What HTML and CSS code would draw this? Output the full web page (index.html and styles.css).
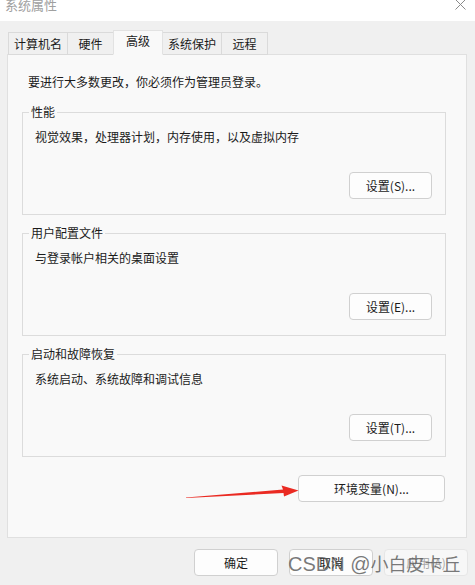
FILE: index.html
```html
<!DOCTYPE html>
<html lang="zh-CN">
<head>
    <meta charset="UTF-8">
    <meta name="viewport" content="width=device-width, initial-scale=1.0">
    <title>系统属性</title>
    <link rel="stylesheet" href="styles.css">
</head>
<body>
    <!-- Title bar -->
    <div class="titlebar">
        <span class="title">系统属性</span>
        <svg class="close" width="11" height="11" viewBox="0 0 11 11">
            <path d="M0.5 0.5 L10.5 10.5 M10.5 0.5 L0.5 10.5" stroke="#8a8a8a" stroke-width="1" fill="none"/>
        </svg>
    </div>

    <div class="dialog">
        <!-- Tabs -->
        <div class="tabs">
            <div class="tab">计算机名</div>
            <div class="tab">硬件</div>
            <div class="tab active">高级</div>
            <div class="tab">系统保护</div>
            <div class="tab">远程</div>
        </div>

        <!-- Advanced panel -->
        <div class="panel">
            <p class="notice">要进行大多数更改，你必须作为管理员登录。</p>

            <div class="group">
                <span class="legend">性能</span>
                <p class="desc">视觉效果，处理器计划，内存使用，以及虚拟内存</p>
                <div class="group-actions">
                    <button class="btn">设置(S)...</button>
                </div>
            </div>

            <div class="group">
                <span class="legend">用户配置文件</span>
                <p class="desc">与登录帐户相关的桌面设置</p>
                <div class="group-actions">
                    <button class="btn">设置(E)...</button>
                </div>
            </div>

            <div class="group">
                <span class="legend">启动和故障恢复</span>
                <p class="desc">系统启动、系统故障和调试信息</p>
                <div class="group-actions">
                    <button class="btn">设置(T)...</button>
                </div>
            </div>

            <div class="env-row">
                <button class="btn btn-env">环境变量(N)...</button>
            </div>
        </div>

        <!-- Dialog buttons -->
        <div class="actions">
            <button class="btn btn-dialog">确定</button>
            <button class="btn btn-dialog">取消</button>
            <button class="btn btn-dialog" disabled>应用(A)</button>
        </div>
    </div>

    <!-- Annotation arrow -->
    <svg class="arrow" width="475" height="585" viewBox="0 0 475 585">
        <polygon points="186,497.5 283,489.6 281.5,485.5 298.5,490.6 284,496.5 283.5,493 186,498" fill="#ea2a22"/>
    </svg>

    <div class="watermark"><span class="wm-latin">CSDN @</span>小白皮卡丘</div>
</body>
</html>
```

FILE: styles.css
```css
/* Base */
body, html {
    margin: 0;
    padding: 0;
}
body {
    position: relative;
    width: 475px;
    height: 585px;
    overflow: hidden;
    background-color: #f0f0f0;
    font-family: "Noto Sans CJK SC", "Noto Sans", sans-serif;
    font-size: 12px;
    color: #1b1b1b;
}
p {
    margin: 0;
}

/* Title bar */
.titlebar {
    height: 21px;
    background: #ffffff;
    display: flex;
    justify-content: space-between;
    align-items: flex-start;
    padding: 0 9px 0 5px;
    overflow: hidden;
}
.title {
    font-size: 13px;
    line-height: 16px;
    margin-top: -3px;
    color: #a0a0a0;
}
.close {
    margin-top: -1px;
}

/* Dialog body */
.dialog {
    padding: 9px 8px 0 7px;
}

/* Tabs */
.tabs {
    display: flex;
    align-items: flex-end;
    padding-left: 1px;
    margin-bottom: -1px;
    position: relative;
    z-index: 1;
}
.tab {
    box-sizing: border-box;
    min-width: 47px;
    height: 23px;
    padding: 0 5px;
    line-height: 21px;
    text-align: center;
    background: #f0f0f0;
    border: 1px solid #dadada;
    margin-left: -1px;
}
.tab:first-child {
    margin-left: 0;
}
.tab.active {
    min-width: 50px;
    height: 25px;
    line-height: 20px;
    background: #f9f9f9;
    border-color: #e2e2e2;
    border-bottom-color: #f9f9f9;
    position: relative;
}

/* Panel */
.panel {
    box-sizing: border-box;
    width: 460px;
    height: 484px;
    background: #f9f9f9;
    border: 1px solid #e0e0e0;
    padding: 19px 20px 0 14px;
}
.notice {
    line-height: 16px;
    padding-left: 6px;
    margin-bottom: 22px;
}

/* Group boxes */
.group {
    border: 1px solid #dcdcdc;
    padding: 0 13px 15px 12px;
    margin-bottom: 18px;
}
.legend {
    display: block;
    width: fit-content;
    margin: -9px 0 0 -6px;
    padding: 0 2px;
    line-height: 16px;
    background: #f9f9f9;
}
.desc {
    line-height: 16px;
    margin-top: 9px;
}
.group-actions {
    display: flex;
    justify-content: flex-end;
    margin-top: 27px;
}

/* Buttons */
.btn {
    box-sizing: border-box;
    width: 83px;
    height: 27px;
    padding: 0;
    font-family: inherit;
    font-size: 12px;
    color: #1b1b1b;
    background: #fdfdfd;
    border: 1px solid #d0d0d0;
    border-radius: 4px;
}
.env-row {
    display: flex;
    justify-content: flex-end;
    padding-right: 1px;
}
.btn-env {
    width: 147px;
}
.actions {
    display: flex;
    justify-content: flex-end;
    gap: 11px;
    margin-top: 11px;
    margin-right: -1px;
}
.btn-dialog {
    width: 84px;
}
.btn-dialog:disabled {
    color: #a8a8a8;
    background: #f7f7f7;
    border-color: #e6e6e6;
}

/* Overlays */
.arrow {
    position: absolute;
    left: 0;
    top: 0;
    pointer-events: none;
}
.watermark {
    position: absolute;
    left: 288px;
    top: 548px;
    font-size: 18px;
    line-height: 30px;
    color: rgba(85, 85, 85, 0.78);
    white-space: nowrap;
}
.wm-latin {
    font-family: "Liberation Sans", Arial, sans-serif;
    font-size: 20px;
}
```
